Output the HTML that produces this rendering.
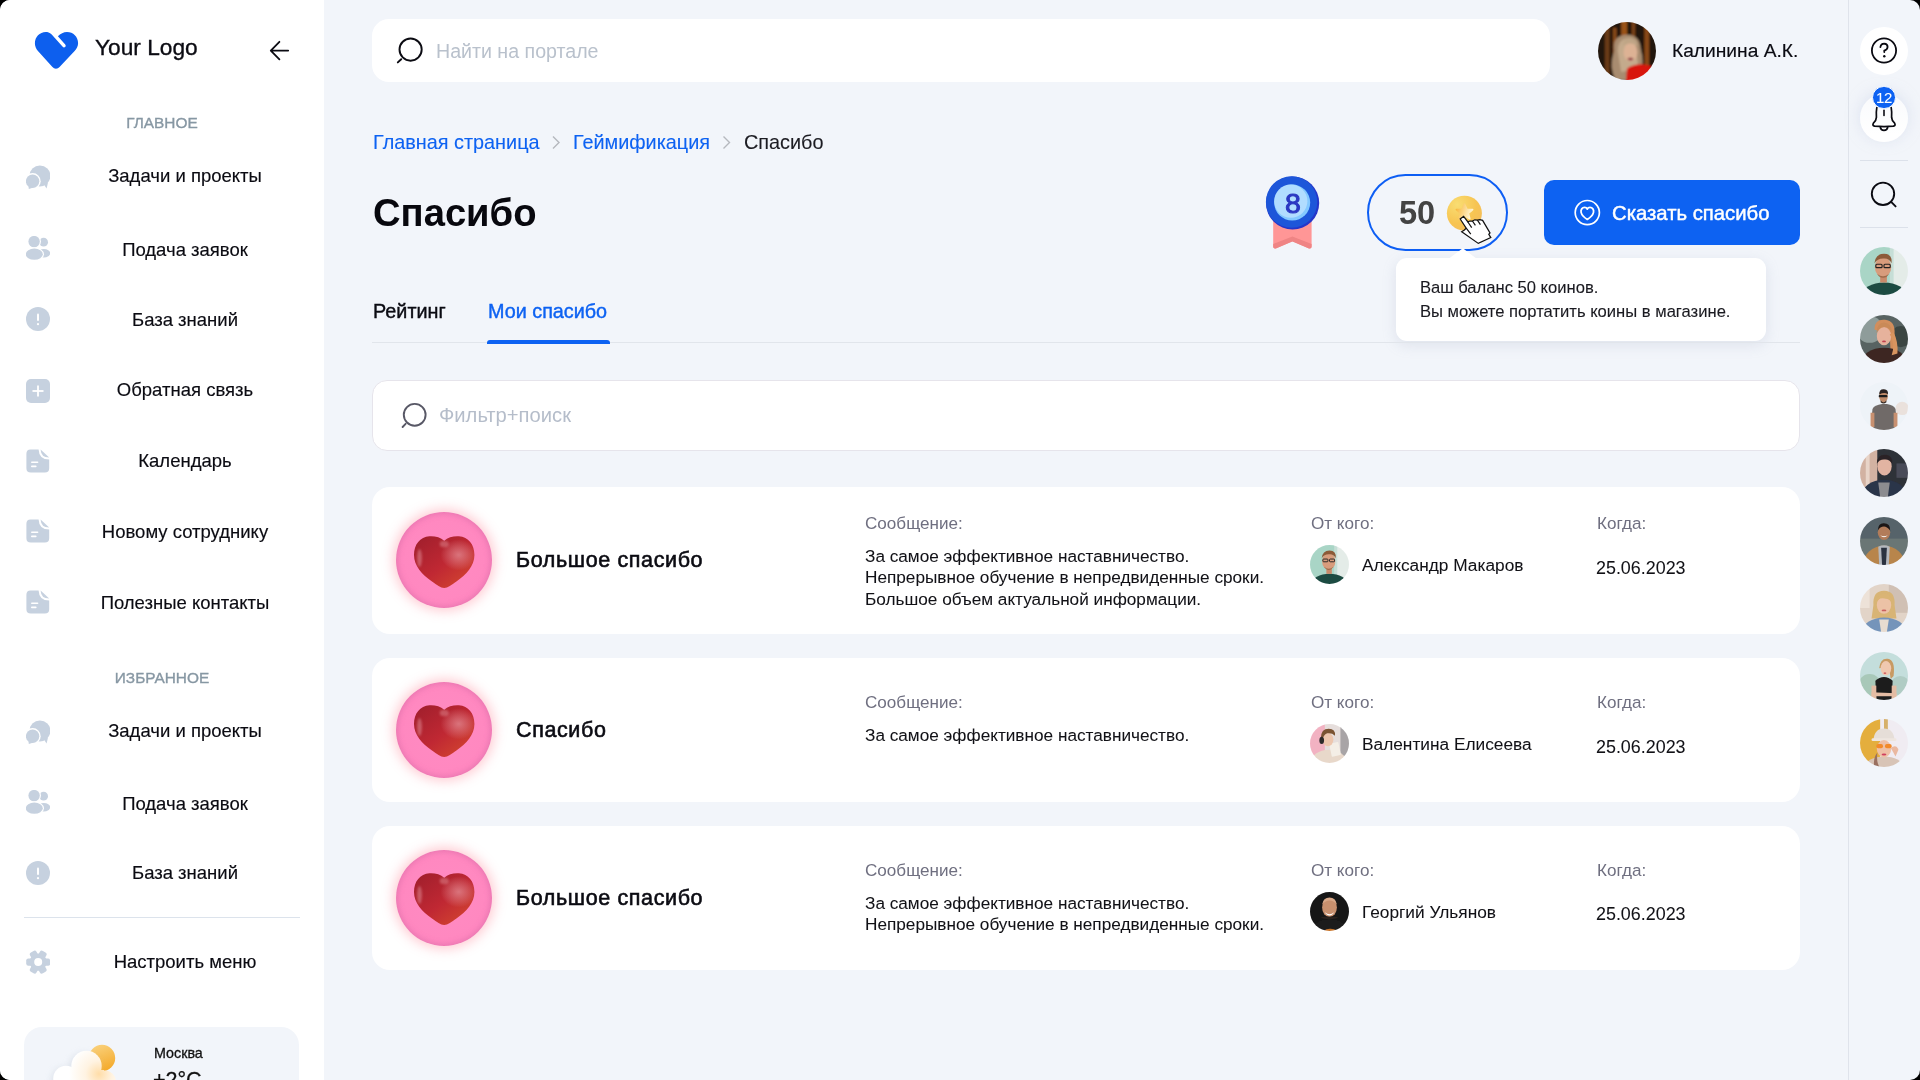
<!DOCTYPE html>
<html><head><meta charset="utf-8"><title>Спасибо</title>
<style>
html,body{margin:0;padding:0;}
body{width:1920px;height:1080px;overflow:hidden;background:#000;position:relative;font-family:"Liberation Sans",sans-serif;}
#page{position:absolute;left:0;top:0;width:1920px;height:1080px;border-radius:10px;overflow:hidden;background:#F2F5FA;}
.t{position:absolute;white-space:nowrap;will-change:transform;}
.r0{border-radius:50%;overflow:hidden;background:radial-gradient(ellipse 17% 20% at 48% 40%, #D9A080 0 96%, transparent 100%),radial-gradient(ellipse 22% 16% at 48% 27%, #8A5A38 0 98%, transparent 100%),radial-gradient(ellipse 42% 30% at 50% 98%, #1F4A44 0 96%, transparent 100%),linear-gradient(90deg,#A8D2C0,#D8E8E0);}
.r1{border-radius:50%;overflow:hidden;background:radial-gradient(ellipse 16% 19% at 48% 42%, #E8B49A 0 96%, transparent 100%),radial-gradient(ellipse 30% 42% at 55% 45%, #C8804A 0 96%, transparent 100%),radial-gradient(ellipse 45% 32% at 50% 100%, #3C2A28 0 96%, transparent 100%),linear-gradient(135deg,#7A8A8A,#3C4A4C);}
.r2{border-radius:50%;overflow:hidden;background:radial-gradient(ellipse 10% 12% at 48% 26%, #B88060 0 96%, transparent 100%),radial-gradient(ellipse 22% 16% at 48% 13%, #2A2220 0 98%, transparent 100%),radial-gradient(ellipse 28% 34% at 50% 80%, #6A6460 0 96%, transparent 100%),linear-gradient(135deg,#E8EEF6,#F4F2EE);}
.r3{border-radius:50%;overflow:hidden;background:radial-gradient(ellipse 14% 17% at 52% 32%, #E0B0A0 0 96%, transparent 100%),radial-gradient(ellipse 22% 16% at 52% 19%, #2A2426 0 98%, transparent 100%),radial-gradient(ellipse 44% 36% at 50% 98%, #2A3448 0 96%, transparent 100%),linear-gradient(90deg,#C8A89A,#3A3C48);}
.r4{border-radius:50%;overflow:hidden;background:radial-gradient(ellipse 13% 16% at 50% 30%, #B07A5A 0 96%, transparent 100%),radial-gradient(ellipse 22% 16% at 50% 17%, #1C1818 0 98%, transparent 100%),radial-gradient(ellipse 42% 38% at 50% 96%, #B88048 0 96%, transparent 100%),linear-gradient(180deg,#5E6A70,#707A78);}
.r5{border-radius:50%;overflow:hidden;background:radial-gradient(ellipse 15% 18% at 50% 40%, #EBC0A4 0 96%, transparent 100%),radial-gradient(ellipse 30% 36% at 50% 44%, #D6B06E 0 96%, transparent 100%),radial-gradient(ellipse 42% 32% at 50% 96%, #6C8CB0 0 96%, transparent 100%),linear-gradient(135deg,#E8D8CC,#B8A898);}
.r6{border-radius:50%;overflow:hidden;background:radial-gradient(ellipse 14% 17% at 55% 34%, #F0C8B0 0 96%, transparent 100%),radial-gradient(ellipse 24% 34% at 58% 36%, #C89A60 0 96%, transparent 100%),radial-gradient(ellipse 30% 34% at 50% 92%, #181818 0 96%, transparent 100%),linear-gradient(135deg,#BCD8DC,#D0E4D8);}
.r7{border-radius:50%;overflow:hidden;background:radial-gradient(ellipse 17% 20% at 50% 48%, #EEC0A8 0 96%, transparent 100%),radial-gradient(ellipse 30% 22% at 50% 30%, #E6DED6 0 96%, transparent 100%),radial-gradient(ellipse 40% 24% at 50% 100%, #D8C0B0 0 96%, transparent 100%),linear-gradient(90deg,#E0A838,#F2E4C8);}
.c0{border-radius:50%;overflow:hidden;background:radial-gradient(ellipse 17% 20% at 48% 40%, #D9A080 0 96%, transparent 100%),radial-gradient(ellipse 22% 16% at 48% 27%, #8A5A38 0 98%, transparent 100%),radial-gradient(ellipse 42% 30% at 50% 98%, #1F4A44 0 96%, transparent 100%),linear-gradient(90deg,#A8D2C0,#D8E8E0);}
.c1{border-radius:50%;overflow:hidden;background:radial-gradient(ellipse 15% 18% at 55% 40%, #ECC4AC 0 96%, transparent 100%),radial-gradient(ellipse 22% 16% at 55% 27%, #6A4A30 0 98%, transparent 100%),radial-gradient(ellipse 42% 34% at 45% 96%, #E6D8CC 0 96%, transparent 100%),linear-gradient(135deg,#F2B4C4,#D8D0CC);}
.c2{border-radius:50%;overflow:hidden;background:radial-gradient(ellipse 16% 19% at 50% 38%, #C8906A 0 96%, transparent 100%),radial-gradient(ellipse 22% 16% at 50% 25%, #2A2020 0 98%, transparent 100%),radial-gradient(ellipse 40% 30% at 50% 100%, #202020 0 96%, transparent 100%),linear-gradient(180deg,#141414,#1A1A1A);}
#uav{background:radial-gradient(ellipse 14% 18% at 50% 45%, #E4B89C 0 96%, transparent 100%),radial-gradient(ellipse 28% 40% at 48% 50%, #C8AE90 0 96%, transparent 100%),radial-gradient(ellipse 34% 22% at 65% 92%, #D8241C 0 96%, transparent 100%),linear-gradient(90deg,#2C1A0E,#8A4A1A 40%,#6A3A16 60%,#2A1A0E);}

</style></head>
<body><div id="page">
<div style="position:absolute;left:0;top:0;width:324px;height:1080px;background:#fff"></div><svg style="position:absolute;left:0;top:0" width="100" height="80" viewBox="0 0 100 80">
<path d="M51.7 34.4 C49.6 32.6 47.6 32 45.8 32 C39.6 32 34.9 37 34.9 43.2 C34.9 46.4 36.2 49 38.4 51.6 L52.2 66.8 C54.4 69.4 57.6 69.4 59.8 66.8 L74.6 51 C76.8 48.6 78.1 46 78.1 43 C78.1 36.8 73.2 32 67 32 C63.6 32 60.4 33.6 57.9 36.3 L65.2 44.4 C65.9 45.2 65.9 46.2 65.1 46.9 C64.4 47.6 63.4 47.5 62.7 46.8 Z" fill="#0D5FEE"/>
</svg><div class="t" style="left:94.50px;top:36.28px;font-size:22.7px;line-height:22.7px;color:#0B0B12;font-weight:400;-webkit-text-stroke:0.35px #0B0B12;">Your Logo</div>
<svg style="position:absolute;left:260px;top:30px" width="40" height="40" viewBox="260 30 40 40">
<path d="M288.2 50.6 H271.2 M279.4 41.8 L270.8 50.6 L279.4 59.3" fill="none" stroke="#0B0B12" stroke-width="1.8" stroke-linecap="round" stroke-linejoin="round"/>
</svg><div class="t" style="left:-438.00px;width:1200px;text-align:center;top:115.36px;font-size:15.4px;line-height:15.4px;color:#8797A3;font-weight:400;-webkit-text-stroke:0.35px #8797A3;">ГЛАВНОЕ</div>
<div class="t" style="left:-438.00px;width:1200px;text-align:center;top:669.96px;font-size:15.4px;line-height:15.4px;color:#8797A3;font-weight:400;-webkit-text-stroke:0.35px #8797A3;">ИЗБРАННОЕ</div>
<svg style="position:absolute;left:26.2px;top:165.40px" width="24" height="24" viewBox="0 0 24 24"><circle cx="13.9" cy="10.9" r="10.5" fill="#C6D1DF"/><path d="M17.5 19 L20.6 23.6 L22 17.6 Z" fill="#C6D1DF"/><circle cx="6.6" cy="16.2" r="8.1" fill="#fff"/><circle cx="6.6" cy="16.2" r="6.7" fill="#C6D1DF"/><path d="M2.4 20 L2.8 24 L7.6 22.4 Z" fill="#C6D1DF"/></svg><div class="t" style="left:-415.00px;width:1200px;text-align:center;top:167.44px;font-size:18.5px;line-height:18.5px;color:#0B0B12;font-weight:400;-webkit-text-stroke:0.15px #0B0B12;">Задачи и проекты</div>
<svg style="position:absolute;left:26.2px;top:236.40px" width="24" height="24" viewBox="0 0 24 24"><circle cx="17.6" cy="6.2" r="4.4" fill="#C6D1DF"/><ellipse cx="17.8" cy="17.2" rx="6.4" ry="4.3" fill="#C6D1DF"/><circle cx="8.1" cy="5.6" r="6.9" fill="#fff"/><circle cx="8.1" cy="5.6" r="5.7" fill="#C6D1DF"/><ellipse cx="8.3" cy="18.2" rx="9.7" ry="6.8" fill="#fff"/><ellipse cx="8.3" cy="18.2" rx="8.5" ry="5.6" fill="#C6D1DF"/></svg><div class="t" style="left:-415.00px;width:1200px;text-align:center;top:240.64px;font-size:18.5px;line-height:18.5px;color:#0B0B12;font-weight:400;-webkit-text-stroke:0.15px #0B0B12;">Подача заявок</div>
<svg style="position:absolute;left:26.2px;top:307.00px" width="24" height="24" viewBox="0 0 24 24"><circle cx="12" cy="12" r="12" fill="#C6D1DF"/><rect x="11" y="6.4" width="2" height="7.6" rx="1" fill="#fff"/><circle cx="12" cy="17.2" r="1.1" fill="#fff"/></svg><div class="t" style="left:-415.00px;width:1200px;text-align:center;top:310.64px;font-size:18.5px;line-height:18.5px;color:#0B0B12;font-weight:400;-webkit-text-stroke:0.15px #0B0B12;">База знаний</div>
<svg style="position:absolute;left:26.2px;top:379.00px" width="24" height="24" viewBox="0 0 24 24"><rect x="0" y="0" width="24" height="24" rx="5" fill="#C6D1DF"/><rect x="11.1" y="6.5" width="1.8" height="11" fill="#fff"/><rect x="6.5" y="11.1" width="11" height="1.8" fill="#fff"/></svg><div class="t" style="left:-415.00px;width:1200px;text-align:center;top:380.64px;font-size:18.5px;line-height:18.5px;color:#0B0B12;font-weight:400;-webkit-text-stroke:0.15px #0B0B12;">Обратная связь</div>
<svg style="position:absolute;left:26.2px;top:448.50px" width="24" height="24" viewBox="0 0 24 24"><path d="M4.5 0.4 H12.6 Q13 10.4 23.2 10.6 V19.2 Q23.2 23.6 18.8 23.6 H4.8 Q0.4 23.6 0.4 19.2 V4.8 Q0.4 0.4 4.5 0.4 Z" fill="#C6D1DF"/><path d="M14.6 0.4 L23.2 8.6 Q15 8.4 14.6 0.4 Z" fill="#C6D1DF"/><rect x="5" y="12.4" width="7.4" height="1.7" rx=".8" fill="#fff"/><rect x="5" y="16.6" width="5.6" height="1.7" rx=".8" fill="#fff"/></svg><div class="t" style="left:-415.00px;width:1200px;text-align:center;top:452.04px;font-size:18.5px;line-height:18.5px;color:#0B0B12;font-weight:400;-webkit-text-stroke:0.15px #0B0B12;">Календарь</div>
<svg style="position:absolute;left:26.2px;top:519.40px" width="24" height="24" viewBox="0 0 24 24"><path d="M4.5 0.4 H12.6 Q13 10.4 23.2 10.6 V19.2 Q23.2 23.6 18.8 23.6 H4.8 Q0.4 23.6 0.4 19.2 V4.8 Q0.4 0.4 4.5 0.4 Z" fill="#C6D1DF"/><path d="M14.6 0.4 L23.2 8.6 Q15 8.4 14.6 0.4 Z" fill="#C6D1DF"/><rect x="5" y="12.4" width="7.4" height="1.7" rx=".8" fill="#fff"/><rect x="5" y="16.6" width="5.6" height="1.7" rx=".8" fill="#fff"/></svg><div class="t" style="left:-415.00px;width:1200px;text-align:center;top:522.84px;font-size:18.5px;line-height:18.5px;color:#0B0B12;font-weight:400;-webkit-text-stroke:0.15px #0B0B12;">Новому сотруднику</div>
<svg style="position:absolute;left:26.2px;top:590.00px" width="24" height="24" viewBox="0 0 24 24"><path d="M4.5 0.4 H12.6 Q13 10.4 23.2 10.6 V19.2 Q23.2 23.6 18.8 23.6 H4.8 Q0.4 23.6 0.4 19.2 V4.8 Q0.4 0.4 4.5 0.4 Z" fill="#C6D1DF"/><path d="M14.6 0.4 L23.2 8.6 Q15 8.4 14.6 0.4 Z" fill="#C6D1DF"/><rect x="5" y="12.4" width="7.4" height="1.7" rx=".8" fill="#fff"/><rect x="5" y="16.6" width="5.6" height="1.7" rx=".8" fill="#fff"/></svg><div class="t" style="left:-415.00px;width:1200px;text-align:center;top:593.74px;font-size:18.5px;line-height:18.5px;color:#0B0B12;font-weight:400;-webkit-text-stroke:0.15px #0B0B12;">Полезные контакты</div>
<svg style="position:absolute;left:26.2px;top:719.60px" width="24" height="24" viewBox="0 0 24 24"><circle cx="13.9" cy="10.9" r="10.5" fill="#C6D1DF"/><path d="M17.5 19 L20.6 23.6 L22 17.6 Z" fill="#C6D1DF"/><circle cx="6.6" cy="16.2" r="8.1" fill="#fff"/><circle cx="6.6" cy="16.2" r="6.7" fill="#C6D1DF"/><path d="M2.4 20 L2.8 24 L7.6 22.4 Z" fill="#C6D1DF"/></svg><div class="t" style="left:-415.00px;width:1200px;text-align:center;top:721.84px;font-size:18.5px;line-height:18.5px;color:#0B0B12;font-weight:400;-webkit-text-stroke:0.15px #0B0B12;">Задачи и проекты</div>
<svg style="position:absolute;left:26.2px;top:790.40px" width="24" height="24" viewBox="0 0 24 24"><circle cx="17.6" cy="6.2" r="4.4" fill="#C6D1DF"/><ellipse cx="17.8" cy="17.2" rx="6.4" ry="4.3" fill="#C6D1DF"/><circle cx="8.1" cy="5.6" r="6.9" fill="#fff"/><circle cx="8.1" cy="5.6" r="5.7" fill="#C6D1DF"/><ellipse cx="8.3" cy="18.2" rx="9.7" ry="6.8" fill="#fff"/><ellipse cx="8.3" cy="18.2" rx="8.5" ry="5.6" fill="#C6D1DF"/></svg><div class="t" style="left:-415.00px;width:1200px;text-align:center;top:794.74px;font-size:18.5px;line-height:18.5px;color:#0B0B12;font-weight:400;-webkit-text-stroke:0.15px #0B0B12;">Подача заявок</div>
<svg style="position:absolute;left:26.2px;top:861.30px" width="24" height="24" viewBox="0 0 24 24"><circle cx="12" cy="12" r="12" fill="#C6D1DF"/><rect x="11" y="6.4" width="2" height="7.6" rx="1" fill="#fff"/><circle cx="12" cy="17.2" r="1.1" fill="#fff"/></svg><div class="t" style="left:-415.00px;width:1200px;text-align:center;top:864.24px;font-size:18.5px;line-height:18.5px;color:#0B0B12;font-weight:400;-webkit-text-stroke:0.15px #0B0B12;">База знаний</div>
<svg style="position:absolute;left:26.2px;top:950.30px" width="24" height="24" viewBox="0 0 24 24"><rect x="12" y="8.4" width="12.2" height="7.4" rx="2.2" fill="#C6D1DF" transform="rotate(0 12.2 12.1)"/><rect x="12" y="8.4" width="12.2" height="7.4" rx="2.2" fill="#C6D1DF" transform="rotate(60 12.2 12.1)"/><rect x="12" y="8.4" width="12.2" height="7.4" rx="2.2" fill="#C6D1DF" transform="rotate(120 12.2 12.1)"/><rect x="12" y="8.4" width="12.2" height="7.4" rx="2.2" fill="#C6D1DF" transform="rotate(180 12.2 12.1)"/><rect x="12" y="8.4" width="12.2" height="7.4" rx="2.2" fill="#C6D1DF" transform="rotate(240 12.2 12.1)"/><rect x="12" y="8.4" width="12.2" height="7.4" rx="2.2" fill="#C6D1DF" transform="rotate(300 12.2 12.1)"/><circle cx="12.2" cy="12.1" r="8.6" fill="#C6D1DF"/><circle cx="12.2" cy="12.1" r="4" fill="#fff"/></svg><div class="t" style="left:-415.00px;width:1200px;text-align:center;top:953.34px;font-size:18.5px;line-height:18.5px;color:#0B0B12;font-weight:400;-webkit-text-stroke:0.15px #0B0B12;">Настроить меню</div>
<div style="position:absolute;left:24px;top:916.5px;width:276px;height:1.5px;background:#DCE3EC"></div><div style="position:absolute;left:24px;top:1027px;width:275px;height:80px;border-radius:18px;background:#F2F5FA"></div><svg style="position:absolute;left:24px;top:1027px" width="120" height="53" viewBox="24 1027 120 53">
<defs>
<linearGradient id="sun" x1="0.2" y1="0" x2="0.6" y2="1"><stop offset="0" stop-color="#FAD27E"/><stop offset="1" stop-color="#F4AA2C"/></linearGradient>
<radialGradient id="cl" gradientUnits="userSpaceOnUse" cx="99" cy="1074" r="30"><stop offset="0" stop-color="#FFDDA8"/><stop offset="0.45" stop-color="#FFF3E2"/><stop offset="1" stop-color="#FFFFFF"/></radialGradient>
<filter id="cs" x="-30%" y="-30%" width="160%" height="160%"><feGaussianBlur stdDeviation="3"/></filter>
</defs>
<circle cx="102" cy="1058" r="13.2" fill="url(#sun)"/>
<g fill="#CBD2DE" opacity="0.55" filter="url(#cs)"><circle cx="84" cy="1068" r="15"/><circle cx="64" cy="1080" r="12.5"/></g>
<g fill="url(#cl)">
<circle cx="86.5" cy="1066" r="15.2"/>
<circle cx="66" cy="1078.5" r="12.8"/>
<circle cx="104.5" cy="1082" r="11.5"/>
<rect x="66" y="1070" width="38" height="12"/>
</g>
</svg><div class="t" style="left:153.70px;top:1046.30px;font-size:14.3px;line-height:14.3px;color:#111;font-weight:400;-webkit-text-stroke:0.3px #111;">Москва</div>
<div class="t" style="left:153.20px;top:1070.00px;font-size:21.5px;line-height:21.5px;color:#111;font-weight:400;-webkit-text-stroke:0.3px #111;">+2°C</div>
<div style="position:absolute;left:372px;top:19px;width:1178px;height:63px;border-radius:17px;background:#fff"></div><svg style="position:absolute;left:390px;top:30px" width="40" height="40" viewBox="390 30 40 40">
<circle cx="410.6" cy="49.6" r="11.1" fill="none" stroke="#0B0B12" stroke-width="1.9"/>
<line x1="401.2" y1="59.2" x2="397.8" y2="62.4" stroke="#0B0B12" stroke-width="1.9" stroke-linecap="round"/>
</svg><div class="t" style="left:436.00px;top:41.51px;font-size:19.6px;line-height:19.6px;color:#B9C1CC;font-weight:400;">Найти на портале</div>
<svg style="position:absolute;left:1598px;top:21.5px" width="58" height="58" viewBox="0 0 100 100"><clipPath id="cp_u"><circle cx="50" cy="50" r="50"/></clipPath><filter id="bl_u" x="-10%" y="-10%" width="120%" height="120%"><feGaussianBlur stdDeviation="1.6"/></filter><g clip-path="url(#cp_u)"><g filter="url(#bl_u)"><rect x="-5" y="-5" width="110" height="110" fill="#24140A"/><rect x="12" y="-5" width="8" height="110" fill="#6A3A14"/><rect x="40" y="-5" width="10" height="40" fill="#9A5218"/><rect x="58" y="-5" width="6" height="50" fill="#7A4214"/><rect x="80" y="-5" width="8" height="110" fill="#8A4A16"/><rect x="26" y="10" width="6" height="60" fill="#8A4C1A"/>
<path d="M28 50 Q24 24 48 22 Q72 20 74 48 Q80 70 74 86 L56 100 L30 100 Q18 76 28 50Z" fill="#A88C70"/>
<path d="M34 50 Q34 30 50 28 Q66 28 66 48 L70 80 L40 86Z" fill="#C4AA8C"/>
<ellipse cx="56" cy="52" rx="12" ry="16" fill="#DDB294"/><path d="M42 40 Q46 26 58 28 Q68 30 68 42 Q60 34 48 38Z" fill="#BFA586"/>
<ellipse cx="56" cy="64" rx="5" ry="2.2" fill="#8A3040"/>
<path d="M50 80 Q70 68 92 76 L96 104 L48 104Z" fill="#D8140E"/></g></g></svg><div class="t" style="left:1671.60px;top:40.85px;font-size:19.2px;line-height:19.2px;color:#0B0B12;font-weight:400;-webkit-text-stroke:0.15px #0B0B12;">Калинина А.К.</div>
<div style="position:absolute;left:1848px;top:0;width:1px;height:1080px;background:#DFE3EB"></div><div style="position:absolute;left:1860px;top:26.5px;width:48px;height:48px;border-radius:50%;background:#fff"></div><svg style="position:absolute;left:1860px;top:26px" width="48" height="48" viewBox="1860 26 48 48">
<circle cx="1884" cy="50.5" r="12.1" fill="none" stroke="#0B0B12" stroke-width="1.8"/>
<path d="M1880.4 47.2 Q1880.9 43.6 1884.2 43.6 Q1887.6 43.8 1887.6 47 Q1887.4 49.6 1884.3 50.6 L1884.3 52" fill="none" stroke="#0B0B12" stroke-width="1.8" stroke-linecap="round"/>
<circle cx="1884.3" cy="56.2" r="1.2" fill="#0B0B12"/>
</svg><div style="position:absolute;left:1860px;top:93.5px;width:48px;height:48px;border-radius:50%;background:linear-gradient(180deg,rgba(255,255,255,0.55),#fff 85%);box-shadow:0 -2px 14px rgba(200,210,232,0.5)"></div><svg style="position:absolute;left:1860px;top:90px" width="48" height="50" viewBox="1860 90 48 50">
<path d="M1876.8 107.6 Q1876.1 111 1876.4 117.4 Q1876.2 120.8 1873.4 123.2 Q1872 125.6 1874.6 126.2 Q1884 127 1893.4 126.2 Q1896 125.6 1894.6 123.2 Q1891.8 120.8 1891.6 117.4 Q1891.9 111 1891.2 107.6" fill="none" stroke="#0B0B12" stroke-width="1.7" stroke-linecap="round" stroke-linejoin="round"/>
<path d="M1880.2 127 Q1880.8 130.4 1884 130.4 Q1887.2 130.4 1887.8 127" fill="none" stroke="#0B0B12" stroke-width="1.7"/>
<line x1="1884" y1="110.4" x2="1884" y2="115.4" stroke="#0B0B12" stroke-width="1.6" stroke-linecap="round"/>
</svg><div style="position:absolute;left:1872.1px;top:85.6px;width:23.6px;height:23.6px;box-sizing:border-box;border:1.2px solid #fff;border-radius:50%;background:#0D62F2"></div><div class="t" style="left:1284.40px;width:1200px;text-align:center;top:89.60px;font-size:15px;line-height:15px;color:#fff;font-weight:400;-webkit-text-stroke:0.05px #fff;letter-spacing:-0.4px;">12</div>
<div style="position:absolute;left:1860px;top:159.5px;width:48px;height:1.2px;background:#DCE1EA"></div><svg style="position:absolute;left:1865px;top:176px" width="38" height="38" viewBox="1865 176 38 38">
<circle cx="1883" cy="193.8" r="11.2" fill="none" stroke="#0B0B12" stroke-width="1.9"/>
<line x1="1891.4" y1="202.2" x2="1895.6" y2="206.4" stroke="#0B0B12" stroke-width="1.9" stroke-linecap="round"/>
</svg><div style="position:absolute;left:1860px;top:226.8px;width:48px;height:1.2px;background:#DCE1EA"></div><svg style="position:absolute;left:1860px;top:247.0px" width="48" height="48" viewBox="0 0 100 100"><clipPath id="cp_r0"><circle cx="50" cy="50" r="50"/></clipPath><filter id="bl_r0" x="-10%" y="-10%" width="120%" height="120%"><feGaussianBlur stdDeviation="1.6"/></filter><g clip-path="url(#cp_r0)"><g filter="url(#bl_r0)"><rect width="100" height="100" fill="#A9D5C6"/><rect x="68" width="32" height="100" fill="#E4ECE8"/><rect x="62" y="0" width="8" height="100" fill="#C6DED6"/>
<ellipse cx="50" cy="100" rx="46" ry="26" fill="#1F4B43"/><rect x="42" y="58" width="14" height="16" fill="#C98A6A"/>
<ellipse cx="48" cy="42" rx="17" ry="21" fill="#D89C7C"/><path d="M30 34 Q32 14 50 14 Q68 14 66 34 Q60 22 48 24 Q36 24 30 34Z" fill="#8C5A38"/>
<rect x="33" y="36" width="13" height="7" rx="2" fill="none" stroke="#222" stroke-width="2.4"/><rect x="50" y="36" width="13" height="7" rx="2" fill="none" stroke="#222" stroke-width="2.4"/>
<path d="M36 56 Q48 66 60 56 Q56 64 48 64 Q40 64 36 56Z" fill="#8A5A3A" opacity=".7"/></g></g></svg><svg style="position:absolute;left:1860px;top:314.6px" width="48" height="48" viewBox="0 0 100 100"><clipPath id="cp_r1"><circle cx="50" cy="50" r="50"/></clipPath><filter id="bl_r1" x="-10%" y="-10%" width="120%" height="120%"><feGaussianBlur stdDeviation="1.6"/></filter><g clip-path="url(#cp_r1)"><g filter="url(#bl_r1)"><rect width="100" height="100" fill="#586462"/><circle cx="20" cy="30" r="28" fill="#8E9C9A"/><circle cx="85" cy="45" r="22" fill="#3A4442"/>
<path d="M30 30 Q30 8 52 10 Q74 12 72 40 L78 80 L64 84 L62 40Z" fill="#D28E5C"/>
<ellipse cx="50" cy="100" rx="48" ry="32" fill="#3C2824"/>
<ellipse cx="50" cy="44" rx="15" ry="19" fill="#E6B29C"/><path d="M34 38 Q36 14 52 16 Q66 18 66 34 Q58 22 44 26 Q38 30 34 38Z" fill="#C98A58"/>
<path d="M62 40 Q74 60 66 84 L78 80 Q80 56 70 36Z" fill="#D8945E"/><ellipse cx="50" cy="55" rx="4" ry="2" fill="#C04050"/></g></g></svg><svg style="position:absolute;left:1860px;top:382.0px" width="48" height="48" viewBox="0 0 100 100"><clipPath id="cp_r2"><circle cx="50" cy="50" r="50"/></clipPath><filter id="bl_r2" x="-10%" y="-10%" width="120%" height="120%"><feGaussianBlur stdDeviation="1.6"/></filter><g clip-path="url(#cp_r2)"><g filter="url(#bl_r2)"><rect width="100" height="100" fill="#EEF3F8"/><circle cx="88" cy="55" r="14" fill="#E8D8D0" opacity=".7"/>
<path d="M26 56 Q30 48 46 46 L56 46 Q70 48 74 56 L78 100 L22 100Z" fill="#6F6B68"/>
<rect x="22" y="64" width="8" height="30" fill="#C89070"/><rect x="70" y="64" width="8" height="30" fill="#C89070"/>
<ellipse cx="49" cy="30" rx="9" ry="12" fill="#C08A68"/><path d="M40 26 Q40 14 50 15 Q60 16 58 26 Q52 20 40 26Z" fill="#2A2220"/>
<rect x="39" y="27" width="18" height="5" rx="2" fill="#1A1A1A"/><path d="M43 38 Q49 46 55 38 L55 42 Q49 48 43 42Z" fill="#3A2A20"/></g></g></svg><svg style="position:absolute;left:1860px;top:449.2px" width="48" height="48" viewBox="0 0 100 100"><clipPath id="cp_r3"><circle cx="50" cy="50" r="50"/></clipPath><filter id="bl_r3" x="-10%" y="-10%" width="120%" height="120%"><feGaussianBlur stdDeviation="1.6"/></filter><g clip-path="url(#cp_r3)"><g filter="url(#bl_r3)"><rect width="100" height="100" fill="#2E3038"/><rect width="36" height="100" fill="#D2B2A2"/><rect x="12" width="8" height="100" fill="#E8D4C8"/><rect x="76" y="30" width="24" height="30" fill="#4A4C58"/>
<ellipse cx="50" cy="100" rx="48" ry="36" fill="#2A3448"/><path d="M38 70 L62 70 L58 100 L42 100Z" fill="#8C8C90"/>
<ellipse cx="51" cy="36" rx="15" ry="19" fill="#E2B4A2"/><path d="M35 30 Q36 12 52 12 Q68 12 67 30 Q60 20 50 22 Q40 22 35 30Z" fill="#2A2426"/></g></g></svg><svg style="position:absolute;left:1860px;top:516.8px" width="48" height="48" viewBox="0 0 100 100"><clipPath id="cp_r4"><circle cx="50" cy="50" r="50"/></clipPath><filter id="bl_r4" x="-10%" y="-10%" width="120%" height="120%"><feGaussianBlur stdDeviation="1.6"/></filter><g clip-path="url(#cp_r4)"><g filter="url(#bl_r4)"><rect width="100" height="100" fill="#56646A"/><rect y="45" width="100" height="55" fill="#6A7674"/>
<ellipse cx="50" cy="100" rx="44" ry="40" fill="#B8854C"/><path d="M38 62 Q50 56 62 62 L60 100 L40 100Z" fill="#B4B8BE"/><path d="M44 64 L56 64 L54 100 L46 100Z" fill="#2A3040"/>
<ellipse cx="50" cy="32" rx="13" ry="16" fill="#B27C5A"/><path d="M37 28 Q38 12 50 13 Q63 13 63 28 Q56 20 50 20 Q42 20 37 28Z" fill="#1C1818"/><path d="M42 38 Q50 46 58 38 Q50 42 42 38Z" fill="#fff"/></g></g></svg><svg style="position:absolute;left:1860px;top:584.2px" width="48" height="48" viewBox="0 0 100 100"><clipPath id="cp_r5"><circle cx="50" cy="50" r="50"/></clipPath><filter id="bl_r5" x="-10%" y="-10%" width="120%" height="120%"><feGaussianBlur stdDeviation="1.6"/></filter><g clip-path="url(#cp_r5)"><g filter="url(#bl_r5)"><rect width="100" height="100" fill="#E2D4C8"/><rect x="60" width="40" height="60" fill="#D0C0B4"/><rect x="0" y="0" width="20" height="50" fill="#EDE2D8"/>
<path d="M28 44 Q26 14 50 14 Q74 14 72 44 L76 72 L24 72Z" fill="#D8B474"/>
<ellipse cx="50" cy="100" rx="46" ry="30" fill="#7594BA"/><path d="M40 74 L60 74 L56 100 L44 100Z" fill="#E8DCD0"/>
<ellipse cx="50" cy="44" rx="15" ry="18" fill="#ECC2A6"/><path d="M34 36 Q38 20 52 20 Q64 20 66 36 Q56 28 42 30Z" fill="#DAB474"/><ellipse cx="50" cy="55" rx="5" ry="2" fill="#C86060"/></g></g></svg><svg style="position:absolute;left:1860px;top:651.6px" width="48" height="48" viewBox="0 0 100 100"><clipPath id="cp_r6"><circle cx="50" cy="50" r="50"/></clipPath><filter id="bl_r6" x="-10%" y="-10%" width="120%" height="120%"><feGaussianBlur stdDeviation="1.6"/></filter><g clip-path="url(#cp_r6)"><g filter="url(#bl_r6)"><rect width="100" height="100" fill="#C4DEDC"/><circle cx="20" cy="70" r="24" fill="#A8C8B8"/><circle cx="84" cy="70" r="20" fill="#B0CCC4"/>
<path d="M32 60 Q40 52 50 52 Q60 52 68 60 L66 100 L34 100Z" fill="#1A1A1A"/><rect x="24" y="70" width="10" height="30" fill="#E4BCA4"/><rect x="66" y="70" width="10" height="30" fill="#E4BCA4"/><path d="M24 84 L76 86 L76 92 L24 92Z" fill="#E4BCA4"/>
<path d="M40 34 Q42 12 58 14 Q74 16 70 50 L64 56 L60 30Z" fill="#C89A62"/>
<ellipse cx="54" cy="34" rx="11" ry="15" fill="#F0C8B0"/><ellipse cx="52" cy="44" rx="3" ry="1.5" fill="#C03040"/></g></g></svg><svg style="position:absolute;left:1860px;top:719.0px" width="48" height="48" viewBox="0 0 100 100"><clipPath id="cp_r7"><circle cx="50" cy="50" r="50"/></clipPath><filter id="bl_r7" x="-10%" y="-10%" width="120%" height="120%"><feGaussianBlur stdDeviation="1.6"/></filter><g clip-path="url(#cp_r7)"><g filter="url(#bl_r7)"><rect width="100" height="100" fill="#F0ECF2"/><rect width="42" height="100" fill="#E4AE3C"/><rect x="50" y="0" width="8" height="40" fill="#D6B06A"/>
<ellipse cx="50" cy="100" rx="40" ry="22" fill="#D8C4B6"/>
<path d="M28 44 Q30 20 50 20 Q70 20 72 44Z" fill="#E6DED8"/><rect x="24" y="40" width="52" height="6" rx="3" fill="#EEE6E0"/>
<ellipse cx="50" cy="62" rx="15" ry="18" fill="#EEC0A6"/><rect x="34" y="52" width="14" height="9" rx="4" fill="#F28A2A"/><rect x="52" y="52" width="14" height="9" rx="4" fill="#F28A2A"/>
<path d="M64 60 Q76 52 80 64 L74 78Z" fill="#EAB8A0"/><path d="M36 70 Q34 90 40 100 L30 100 Q26 84 36 70Z" fill="#9A7060"/><ellipse cx="50" cy="74" rx="5" ry="2" fill="#D04060"/></g></g></svg><div class="t" style="left:373.30px;top:133.00px;font-size:19.85px;line-height:19.85px;color:#0D62F2;font-weight:400;-webkit-text-stroke:0.1px #0D62F2;">Главная страница</div>
<svg style="position:absolute;left:550px;top:134px" width="12" height="16" viewBox="550 134 12 16"><path d="M553 136.5 L559 142.6 L553 148.6" fill="none" stroke="#B5B8BE" stroke-width="1.4"/></svg><div class="t" style="left:573.40px;top:132.80px;font-size:19.85px;line-height:19.85px;color:#0D62F2;font-weight:400;-webkit-text-stroke:0.1px #0D62F2;">Геймификация</div>
<svg style="position:absolute;left:720px;top:134px" width="12" height="16" viewBox="720 134 12 16"><path d="M723.5 136.5 L729.5 142.5 L723.5 148.5" fill="none" stroke="#B5B8BE" stroke-width="1.4"/></svg><div class="t" style="left:743.50px;top:132.80px;font-size:19.85px;line-height:19.85px;color:#1C1C22;font-weight:400;-webkit-text-stroke:0.1px #1C1C22;">Спасибо</div>
<div class="t" style="left:373.30px;top:193.56px;font-size:38.2px;line-height:38.2px;color:#08080E;font-weight:700;">Спасибо</div>
<svg style="position:absolute;left:1260px;top:170px" width="66" height="84" viewBox="1260 170 66 84">
<path d="M1273.2 218 H1311.6 V246.6 Q1311.6 249 1309 248.4 L1292.4 241.2 L1275.8 248.4 Q1273.2 249 1273.2 246.6 Z" fill="#FF9696"/>
<path d="M1273.2 244 L1292.4 236.6 L1311.6 244 V246.6 Q1311.6 249 1309 248.4 L1292.4 241.6 L1275.8 248.4 Q1273.2 249 1273.2 246.6 Z" fill="#EF8484"/>
<circle cx="1292.6" cy="203" r="26.6" fill="#2536C9"/>
<circle cx="1291.6" cy="202" r="25.7" fill="#1D56D9"/>
<circle cx="1292.2" cy="202.6" r="18" fill="#84C9FF"/>
<circle cx="1290.8" cy="201.2" r="16.6" fill="#B1DDFF"/>
</svg><div class="t" style="left:692.70px;width:1200px;text-align:center;top:189.17px;font-size:28.5px;line-height:28.5px;color:#2B38C2;font-weight:400;-webkit-text-stroke:1.0px #2B38C2;">8</div>
<div style="position:absolute;left:1366.8px;top:173.7px;width:141.2px;height:77px;box-sizing:border-box;border:2.6px solid #0D5EF4;border-radius:40px"></div><div class="t" style="left:1399.20px;top:196.80px;font-size:32.6px;line-height:32.6px;color:#434343;font-weight:700;">50</div>
<svg style="position:absolute;left:1440px;top:190px" width="60" height="60" viewBox="1440 190 60 60">
<defs>
<radialGradient id="coin" cx="0.3" cy="0.25" r="0.9"><stop offset="0" stop-color="#F9DD72"/><stop offset="0.6" stop-color="#F7C452"/><stop offset="1" stop-color="#F3BC5E"/></radialGradient>
<linearGradient id="star" x1="0" y1="0" x2="1" y2="0.3"><stop offset="0" stop-color="#F8B432"/><stop offset="1" stop-color="#FFF2CF"/></linearGradient>
</defs>
<circle cx="1464.4" cy="213.2" r="17.5" fill="url(#coin)"/>
<path d="M1464.5 204 L1466.9 209.3 L1472.6 209.6 L1468.3 213.3 L1469.8 218.8 L1464.5 215.9 L1459.2 218.8 L1460.7 213.3 L1456.4 209.6 L1462.1 209.3 Z" fill="url(#star)" stroke="url(#star)" stroke-width="1.6" stroke-linejoin="round"/>
<path d="M1463.6 216.3 L1467.9 222 L1469.8 221 L1472.4 221 L1474.8 219.8 L1477.4 220.2 L1479.8 219.6 L1482.6 220.4 L1490 233 L1488.8 234.4 L1490.8 237.6 L1478.3 243.4 L1461.7 231.8 L1464.4 230 L1466.2 228.2 L1460.2 219 Z" fill="#fff" stroke="#111" stroke-width="1.25" stroke-linejoin="miter"/>
<path d="M1466.2 228.2 L1470.8 234.2 M1467.9 222 L1471.7 227.6 M1472.4 221 L1475.4 225.4 M1477.4 220.2 L1480.4 224.6" stroke="#111" stroke-width="1.2" fill="none"/>
</svg><div style="position:absolute;left:1544px;top:180px;width:256px;height:64.8px;border-radius:10px;background:#0D62F2"></div><svg style="position:absolute;left:1570px;top:195px" width="36" height="36" viewBox="1570 195 36 36">
<circle cx="1587.3" cy="212.6" r="12.1" fill="none" stroke="#fff" stroke-width="1.7"/>
<path d="M1587.3 219.4 C1585 218 1581.8 215.4 1581.1 212.4 C1580.5 209.6 1582.2 207.4 1584.6 207.4 C1586 207.4 1586.9 208.2 1587.3 209.1 C1587.7 208.2 1588.6 207.4 1590 207.4 C1592.4 207.4 1594.1 209.6 1593.5 212.4 C1592.8 215.4 1589.6 218 1587.3 219.4 Z" fill="none" stroke="#fff" stroke-width="1.8" stroke-linejoin="round"/>
</svg><div class="t" style="left:1612.00px;top:202.62px;font-size:20.3px;line-height:20.3px;color:#fff;font-weight:400;-webkit-text-stroke:0.45px #fff;">Сказать спасибо</div>
<div style="position:absolute;left:1395.7px;top:257.5px;width:370.3px;height:83.3px;border-radius:11px;background:#fff;box-shadow:0 4px 14px rgba(150,160,185,0.22)"></div><svg style="position:absolute;left:1445px;top:246px" width="36" height="14" viewBox="1445 246 36 14"><path d="M1449 258.5 L1462.8 248.2 L1476.4 258.5 Z" fill="#fff"/></svg><div class="t" style="left:1420.00px;top:279.75px;font-size:16.6px;line-height:16.6px;color:#1A1A20;font-weight:400;-webkit-text-stroke:0.1px #1A1A20;">Ваш баланс 50 коинов.</div>
<div class="t" style="left:1420.00px;top:304.35px;font-size:16.6px;line-height:16.6px;color:#1A1A20;font-weight:400;-webkit-text-stroke:0.1px #1A1A20;">Вы можете портатить коины в магазине.</div>
<div style="position:absolute;left:372px;top:341.8px;width:1428px;height:1.6px;background:#E1E5EB"></div><div class="t" style="left:373.40px;top:301.84px;font-size:19.8px;line-height:19.8px;color:#0B0B12;font-weight:400;-webkit-text-stroke:0.4px #0B0B12;">Рейтинг</div>
<div class="t" style="left:487.50px;top:301.84px;font-size:19.8px;line-height:19.8px;color:#0D62F2;font-weight:400;-webkit-text-stroke:0.4px #0D62F2;">Мои спасибо</div>
<div style="position:absolute;left:487px;top:339.6px;width:123.4px;height:4px;border-radius:3px 3px 0 0;background:#0D62F2"></div><div style="position:absolute;left:372px;top:379.5px;width:1428px;height:71.3px;box-sizing:border-box;border:1.2px solid #E6E4EB;border-radius:15px;background:#fff"></div><svg style="position:absolute;left:396px;top:396px" width="36" height="36" viewBox="396 396 36 36">
<circle cx="414.7" cy="414.8" r="10.9" fill="none" stroke="#585866" stroke-width="1.9"/>
<line x1="405.6" y1="423.8" x2="402.6" y2="427" stroke="#585866" stroke-width="1.9" stroke-linecap="round"/>
</svg><div class="t" style="left:438.50px;top:405.20px;font-size:20.2px;line-height:20.2px;color:#B5BDCA;font-weight:400;">Фильтр+поиск</div>
<div style="position:absolute;left:372px;top:487px;width:1428px;height:147px;border-radius:18px;background:#fff"></div><div style="position:absolute;left:396px;top:512.2px;width:96px;height:96px;border-radius:50%;background:radial-gradient(circle at 50% 50%, #FF8BC2 0%, #FF88C0 62%, #E57DB0 100%);box-shadow:0 0 12px 3px rgba(255,120,140,0.38), inset 0 0 7px rgba(200,80,150,0.38)"></div><svg style="position:absolute;left:413.6px;top:535.8px" width="61" height="53" viewBox="0 0 61 53">
<defs>
<linearGradient id="hg0" x1="0" y1="0" x2="0.9" y2="1"><stop offset="0" stop-color="#9E1E2C"/><stop offset="0.55" stop-color="#C02833"/><stop offset="1" stop-color="#D4482F"/></linearGradient>
<filter id="hb0" x="-50%" y="-50%" width="200%" height="200%"><feGaussianBlur stdDeviation="1.2"/></filter>
<radialGradient id="hh0" cx="0.74" cy="0.36" r="0.3"><stop offset="0" stop-color="#DE8088" stop-opacity="0.85"/><stop offset="1" stop-color="#E28A90" stop-opacity="0"/></radialGradient>
</defs>
<path d="M30.2 4.8 C26.5 1.2 21 0 15.5 0.3 C6 0.9 0 8.5 0 19 C0 30 8 38.5 18 45.5 C23 49 26.5 52 30.2 52 C33.9 52 37.4 49 42.4 45.5 C52.4 38.5 60.4 30 60.4 19 C60.4 8.5 54.4 0.9 44.9 0.3 C39.4 0 33.9 1.2 30.2 4.8 Z" fill="url(#hg0)"/>
<path d="M30.2 4.8 C26.5 1.2 21 0 15.5 0.3 C6 0.9 0 8.5 0 19 C0 30 8 38.5 18 45.5 C23 49 26.5 52 30.2 52 C33.9 52 37.4 49 42.4 45.5 C52.4 38.5 60.4 30 60.4 19 C60.4 8.5 54.4 0.9 44.9 0.3 C39.4 0 33.9 1.2 30.2 4.8 Z" fill="url(#hh0)"/>
<g filter="url(#hb0)"><ellipse cx="5.5" cy="22" rx="2.4" ry="9" fill="#E8A0A8" opacity="0.45"/>
<ellipse cx="30.2" cy="8" rx="4.5" ry="3.2" fill="#E8A0A8" opacity="0.4"/></g>
</svg><div class="t" style="left:516.30px;top:550.30px;font-size:21.5px;line-height:21.5px;color:#0B0B12;font-weight:400;-webkit-text-stroke:0.6px #0B0B12;letter-spacing:0.62px;">Большое спасибо</div>
<div class="t" style="left:864.80px;top:514.52px;font-size:17.1px;line-height:17.1px;color:#6F6F80;font-weight:400;">Сообщение:</div>
<div class="t" style="left:864.80px;top:548.04px;font-size:17.2px;line-height:17.2px;color:#111116;font-weight:400;-webkit-text-stroke:0.05px #111116;">За самое эффективное наставничество.</div>
<div class="t" style="left:864.80px;top:569.44px;font-size:17.2px;line-height:17.2px;color:#111116;font-weight:400;-webkit-text-stroke:0.05px #111116;">Непрерывное обучение в непредвиденные сроки.</div>
<div class="t" style="left:864.80px;top:590.84px;font-size:17.2px;line-height:17.2px;color:#111116;font-weight:400;-webkit-text-stroke:0.05px #111116;">Большое объем актуальной информации.</div>
<div class="t" style="left:1311.00px;top:514.82px;font-size:17.1px;line-height:17.1px;color:#6F6F80;font-weight:400;">От кого:</div>
<div class="t" style="left:1596.90px;top:514.82px;font-size:17.1px;line-height:17.1px;color:#6F6F80;font-weight:400;">Когда:</div>
<svg style="position:absolute;left:1310px;top:545.0px" width="39" height="39" viewBox="0 0 100 100"><clipPath id="cp_c0"><circle cx="50" cy="50" r="50"/></clipPath><filter id="bl_c0" x="-10%" y="-10%" width="120%" height="120%"><feGaussianBlur stdDeviation="1.6"/></filter><g clip-path="url(#cp_c0)"><g filter="url(#bl_c0)"><rect width="100" height="100" fill="#A9D5C6"/><rect x="68" width="32" height="100" fill="#E4ECE8"/><rect x="62" y="0" width="8" height="100" fill="#C6DED6"/>
<ellipse cx="50" cy="100" rx="46" ry="26" fill="#1F4B43"/><rect x="42" y="58" width="14" height="16" fill="#C98A6A"/>
<ellipse cx="48" cy="42" rx="17" ry="21" fill="#D89C7C"/><path d="M30 34 Q32 14 50 14 Q68 14 66 34 Q60 22 48 24 Q36 24 30 34Z" fill="#8C5A38"/>
<rect x="33" y="36" width="13" height="7" rx="2" fill="none" stroke="#222" stroke-width="2.4"/><rect x="50" y="36" width="13" height="7" rx="2" fill="none" stroke="#222" stroke-width="2.4"/>
<path d="M36 56 Q48 66 60 56 Q56 64 48 64 Q40 64 36 56Z" fill="#8A5A3A" opacity=".7"/></g></g></svg><div class="t" style="left:1361.90px;top:556.76px;font-size:17.3px;line-height:17.3px;color:#111116;font-weight:400;-webkit-text-stroke:0.05px #111116;">Александр Макаров</div>
<div class="t" style="left:1596.00px;top:559.55px;font-size:17.9px;line-height:17.9px;color:#111116;font-weight:400;-webkit-text-stroke:0.05px #111116;">25.06.2023</div>
<div style="position:absolute;left:372px;top:658px;width:1428px;height:144px;border-radius:18px;background:#fff"></div><div style="position:absolute;left:396px;top:681.8px;width:96px;height:96px;border-radius:50%;background:radial-gradient(circle at 50% 50%, #FF8BC2 0%, #FF88C0 62%, #E57DB0 100%);box-shadow:0 0 12px 3px rgba(255,120,140,0.38), inset 0 0 7px rgba(200,80,150,0.38)"></div><svg style="position:absolute;left:413.6px;top:705.4px" width="61" height="53" viewBox="0 0 61 53">
<defs>
<linearGradient id="hg1" x1="0" y1="0" x2="0.9" y2="1"><stop offset="0" stop-color="#9E1E2C"/><stop offset="0.55" stop-color="#C02833"/><stop offset="1" stop-color="#D4482F"/></linearGradient>
<filter id="hb1" x="-50%" y="-50%" width="200%" height="200%"><feGaussianBlur stdDeviation="1.2"/></filter>
<radialGradient id="hh1" cx="0.74" cy="0.36" r="0.3"><stop offset="0" stop-color="#DE8088" stop-opacity="0.85"/><stop offset="1" stop-color="#E28A90" stop-opacity="0"/></radialGradient>
</defs>
<path d="M30.2 4.8 C26.5 1.2 21 0 15.5 0.3 C6 0.9 0 8.5 0 19 C0 30 8 38.5 18 45.5 C23 49 26.5 52 30.2 52 C33.9 52 37.4 49 42.4 45.5 C52.4 38.5 60.4 30 60.4 19 C60.4 8.5 54.4 0.9 44.9 0.3 C39.4 0 33.9 1.2 30.2 4.8 Z" fill="url(#hg1)"/>
<path d="M30.2 4.8 C26.5 1.2 21 0 15.5 0.3 C6 0.9 0 8.5 0 19 C0 30 8 38.5 18 45.5 C23 49 26.5 52 30.2 52 C33.9 52 37.4 49 42.4 45.5 C52.4 38.5 60.4 30 60.4 19 C60.4 8.5 54.4 0.9 44.9 0.3 C39.4 0 33.9 1.2 30.2 4.8 Z" fill="url(#hh1)"/>
<g filter="url(#hb1)"><ellipse cx="5.5" cy="22" rx="2.4" ry="9" fill="#E8A0A8" opacity="0.45"/>
<ellipse cx="30.2" cy="8" rx="4.5" ry="3.2" fill="#E8A0A8" opacity="0.4"/></g>
</svg><div class="t" style="left:516.30px;top:719.50px;font-size:21.5px;line-height:21.5px;color:#0B0B12;font-weight:400;-webkit-text-stroke:0.6px #0B0B12;letter-spacing:0.62px;">Спасибо</div>
<div class="t" style="left:864.80px;top:693.82px;font-size:17.1px;line-height:17.1px;color:#6F6F80;font-weight:400;">Сообщение:</div>
<div class="t" style="left:864.80px;top:727.04px;font-size:17.2px;line-height:17.2px;color:#111116;font-weight:400;-webkit-text-stroke:0.05px #111116;">За самое эффективное наставничество.</div>
<div class="t" style="left:1311.00px;top:694.12px;font-size:17.1px;line-height:17.1px;color:#6F6F80;font-weight:400;">От кого:</div>
<div class="t" style="left:1596.90px;top:694.12px;font-size:17.1px;line-height:17.1px;color:#6F6F80;font-weight:400;">Когда:</div>
<svg style="position:absolute;left:1310px;top:724.0px" width="39" height="39" viewBox="0 0 100 100"><clipPath id="cp_c1"><circle cx="50" cy="50" r="50"/></clipPath><filter id="bl_c1" x="-10%" y="-10%" width="120%" height="120%"><feGaussianBlur stdDeviation="1.6"/></filter><g clip-path="url(#cp_c1)"><g filter="url(#bl_c1)"><rect width="100" height="100" fill="#E6DEDC"/><rect width="38" height="100" fill="#F2B2C2"/><rect x="78" width="22" height="100" fill="#A8A4A6"/>
<ellipse cx="48" cy="100" rx="46" ry="34" fill="#E8D8CA"/><rect x="52" y="48" width="24" height="34" rx="2" fill="#F4EEE6" transform="rotate(-12 64 64)"/>
<ellipse cx="46" cy="40" rx="14" ry="17" fill="#EDC6AE"/><path d="M28 36 Q28 12 48 12 Q66 12 64 30 Q56 22 44 24 Q34 28 32 42Z" fill="#7A5232"/>
<ellipse cx="30" cy="42" rx="6" ry="9" fill="#2E2A2C"/></g></g></svg><div class="t" style="left:1361.90px;top:735.86px;font-size:17.3px;line-height:17.3px;color:#111116;font-weight:400;-webkit-text-stroke:0.05px #111116;">Валентина Елисеева</div>
<div class="t" style="left:1596.00px;top:739.35px;font-size:17.9px;line-height:17.9px;color:#111116;font-weight:400;-webkit-text-stroke:0.05px #111116;">25.06.2023</div>
<div style="position:absolute;left:372px;top:826px;width:1428px;height:144px;border-radius:18px;background:#fff"></div><div style="position:absolute;left:396px;top:849.8px;width:96px;height:96px;border-radius:50%;background:radial-gradient(circle at 50% 50%, #FF8BC2 0%, #FF88C0 62%, #E57DB0 100%);box-shadow:0 0 12px 3px rgba(255,120,140,0.38), inset 0 0 7px rgba(200,80,150,0.38)"></div><svg style="position:absolute;left:413.6px;top:873.4px" width="61" height="53" viewBox="0 0 61 53">
<defs>
<linearGradient id="hg2" x1="0" y1="0" x2="0.9" y2="1"><stop offset="0" stop-color="#9E1E2C"/><stop offset="0.55" stop-color="#C02833"/><stop offset="1" stop-color="#D4482F"/></linearGradient>
<filter id="hb2" x="-50%" y="-50%" width="200%" height="200%"><feGaussianBlur stdDeviation="1.2"/></filter>
<radialGradient id="hh2" cx="0.74" cy="0.36" r="0.3"><stop offset="0" stop-color="#DE8088" stop-opacity="0.85"/><stop offset="1" stop-color="#E28A90" stop-opacity="0"/></radialGradient>
</defs>
<path d="M30.2 4.8 C26.5 1.2 21 0 15.5 0.3 C6 0.9 0 8.5 0 19 C0 30 8 38.5 18 45.5 C23 49 26.5 52 30.2 52 C33.9 52 37.4 49 42.4 45.5 C52.4 38.5 60.4 30 60.4 19 C60.4 8.5 54.4 0.9 44.9 0.3 C39.4 0 33.9 1.2 30.2 4.8 Z" fill="url(#hg2)"/>
<path d="M30.2 4.8 C26.5 1.2 21 0 15.5 0.3 C6 0.9 0 8.5 0 19 C0 30 8 38.5 18 45.5 C23 49 26.5 52 30.2 52 C33.9 52 37.4 49 42.4 45.5 C52.4 38.5 60.4 30 60.4 19 C60.4 8.5 54.4 0.9 44.9 0.3 C39.4 0 33.9 1.2 30.2 4.8 Z" fill="url(#hh2)"/>
<g filter="url(#hb2)"><ellipse cx="5.5" cy="22" rx="2.4" ry="9" fill="#E8A0A8" opacity="0.45"/>
<ellipse cx="30.2" cy="8" rx="4.5" ry="3.2" fill="#E8A0A8" opacity="0.4"/></g>
</svg><div class="t" style="left:516.30px;top:887.50px;font-size:21.5px;line-height:21.5px;color:#0B0B12;font-weight:400;-webkit-text-stroke:0.6px #0B0B12;letter-spacing:0.62px;">Большое спасибо</div>
<div class="t" style="left:864.80px;top:861.72px;font-size:17.1px;line-height:17.1px;color:#6F6F80;font-weight:400;">Сообщение:</div>
<div class="t" style="left:864.80px;top:895.04px;font-size:17.2px;line-height:17.2px;color:#111116;font-weight:400;-webkit-text-stroke:0.05px #111116;">За самое эффективное наставничество.</div>
<div class="t" style="left:864.80px;top:916.44px;font-size:17.2px;line-height:17.2px;color:#111116;font-weight:400;-webkit-text-stroke:0.05px #111116;">Непрерывное обучение в непредвиденные сроки.</div>
<div class="t" style="left:1311.00px;top:862.02px;font-size:17.1px;line-height:17.1px;color:#6F6F80;font-weight:400;">От кого:</div>
<div class="t" style="left:1596.90px;top:862.02px;font-size:17.1px;line-height:17.1px;color:#6F6F80;font-weight:400;">Когда:</div>
<svg style="position:absolute;left:1310px;top:892.0px" width="39" height="39" viewBox="0 0 100 100"><clipPath id="cp_c2"><circle cx="50" cy="50" r="50"/></clipPath><filter id="bl_c2" x="-10%" y="-10%" width="120%" height="120%"><feGaussianBlur stdDeviation="1.6"/></filter><g clip-path="url(#cp_c2)"><g filter="url(#bl_c2)"><rect width="100" height="100" fill="#131313"/><ellipse cx="50" cy="100" rx="46" ry="30" fill="#1E1E1E"/><ellipse cx="52" cy="100" rx="14" ry="6" fill="#C8742C"/>
<ellipse cx="50" cy="40" rx="19" ry="24" fill="#C8906E"/><path d="M31 32 Q34 14 50 14 Q66 14 69 32 Q60 22 50 22 Q40 22 31 32Z" fill="#D8A888"/>
<path d="M38 52 Q50 62 62 52 Q58 60 50 60 Q42 60 38 52Z" fill="#fff"/><ellipse cx="50" cy="66" rx="22" ry="4" fill="#3A2A22" opacity=".6"/></g></g></svg><div class="t" style="left:1361.90px;top:903.86px;font-size:17.3px;line-height:17.3px;color:#111116;font-weight:400;-webkit-text-stroke:0.05px #111116;">Георгий Ульянов</div>
<div class="t" style="left:1596.00px;top:906.45px;font-size:17.9px;line-height:17.9px;color:#111116;font-weight:400;-webkit-text-stroke:0.05px #111116;">25.06.2023</div>

</div></body></html>
